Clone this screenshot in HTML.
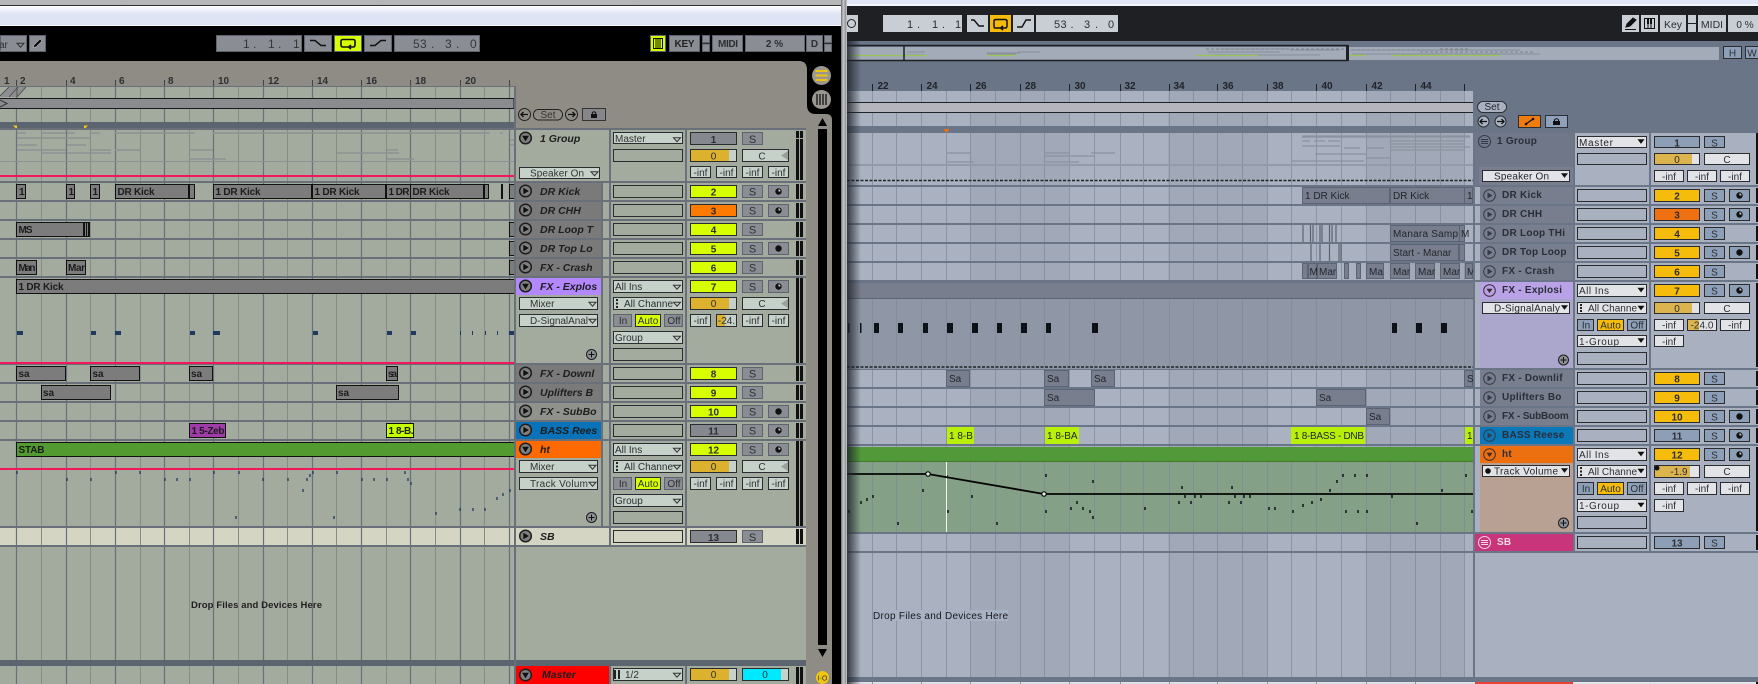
<!DOCTYPE html>
<html><head><meta charset="utf-8"><title>Live</title>
<style>
html,body{margin:0;padding:0;background:#000;width:1758px;height:684px;overflow:hidden}
svg{display:block}
rect{shape-rendering:crispEdges}
text{font-family:"Liberation Sans",sans-serif}
.n{font-weight:bold;font-style:italic;font-size:10.5px;fill:#1e1e1e}
.b{font-weight:bold}
.c{text-anchor:middle}
.r{font-size:10px;fill:#23262c}
.m{font-weight:bold;font-size:10px;fill:#2a2e38;letter-spacing:.25px}
.k{stroke:#2a2c2f;stroke-width:1}
.ld{fill:#c6d1ca}
.lg{fill:#a3aa9e}
.lb{fill:#868890}
.ly{fill:#d8ff00}
.lo{fill:#ff7a00}
.au{fill:#dcb12e}
.rd{fill:#e2e3e6}
.rg{fill:#a9b1c0}
.rb{fill:#8d9fb6}
.ry{fill:#f5bc0b}
.ro{fill:#ef7010}
.cl{fill:#7c7c7c;stroke:#111;stroke-width:1}
.cr{fill:#787e8e;stroke:#5c6372;stroke-width:1}
.bk{fill:#8b8d94;stroke:#5d646e}
.bw{fill:#c9cdd4}
</style></head><body>
<svg xmlns="http://www.w3.org/2000/svg" width="1758" height="684" viewBox="0 0 1758 684" font-size="10" fill="#2c2f33">
<defs>
<linearGradient id="sh" x1="0" x2="1" y1="0" y2="0"><stop offset="0" stop-color="#20232a" stop-opacity=".85"/><stop offset="1" stop-color="#20232a" stop-opacity="0"/></linearGradient>
<linearGradient id="ed" x1="0" x2="1" y1="0" y2="0"><stop offset="0" stop-color="#6f7173"/><stop offset=".4" stop-color="#c8c9cb"/><stop offset=".85" stop-color="#8b8d90"/><stop offset="1" stop-color="#f4f4f4"/></linearGradient>
<linearGradient id="tw" x1="0" x2="0" y1="0" y2="1"><stop offset="0" stop-color="#fff"/><stop offset=".4" stop-color="#dfe5f5"/><stop offset="1" stop-color="#dde3f4"/></linearGradient>
<g id="pl"><circle r="5.8" fill="#807f80" stroke="#1d1d1d" stroke-width="1.5"/><path d="M-2.2-3.3L3.4 0L-2.2 3.3Z" fill="#111"/></g>
<g id="dn"><circle r="5.8" fill="#807f80" stroke="#1d1d1d" stroke-width="1.5"/><path d="M-3.4-2.2H3.4L0 3.4Z" fill="#111"/></g>
<g id="pr"><circle r="5.8" fill="none" stroke="#333a48" stroke-width="1"/><path d="M-2-3L3 0L-2 3Z" fill="#333a48"/></g>
<g id="dr"><circle r="5.8" fill="none" stroke="#3a2b30" stroke-width="1"/><path d="M-3-1.8H3L0 2.6Z" fill="#3a2b30"/></g>
<path id="ar" d="M-3.5-1.8H3.5L0 2.2Z" fill="none" stroke="#333" stroke-width="1"/>
<path id="ab" d="M-3.5-2.2H3.5L0 2.4Z" fill="#111"/>
<g id="plu"><circle r="5" fill="#8b8f96" stroke="#1d1d1d"/><path d="M-3 0H3M0-3V3" stroke="#111" stroke-width="1"/></g>
<g id="arm"><circle r="3.2" fill="#111"/><path d="M0-2.2A2.2 2.2 0 0 1 2 0H0Z" fill="#ccc"/></g>
<circle id="dot" r="3.2" fill="#111"/>
<g id="L"><rect class="lg k" x="613.5" y=".5" width="69" height="12"/><rect class="bk" x="742.5" y=".5" width="20" height="12"/><rect x="796" y="-1" width="3" height="15" fill="#111"/><rect x="800" y="-1" width="3" height="15" fill="#111"/></g>
<g id="R"><rect class="rg k" x="1577.5" y=".5" width="69" height="12"/><rect class="rb k" x="1704.5" y=".5" width="20" height="12"/><rect x="1756" y="-1" width="2" height="15" fill="#111"/></g>
</defs>

<!-- LEFT WINDOW frame -->
<rect x="0" y="0" width="847" height="5" fill="#b5b6b8"/>
<rect x="0" y="5" width="841" height="1" fill="#2f3033"/>
<rect x="0" y="6" width="841" height="19" fill="url(#tw)"/>
<rect x="0" y="25" width="841" height="1" fill="#f5f6fa"/>
<rect x="0" y="26" width="841" height="658" fill="#000"/>
<rect x="0" y="61" width="807" height="623" fill="#8f8c85"/>
<path d="M799 61Q807 61 807 70V105Q807 114 816 114H832V684H807V61Z" fill="#000"/>
<path d="M790 61Q807 61 807 70V105Q807 114 816 114H826Q832 114 832 120V684H790Z" fill="#8f8c85"/>

<!-- left transport -->
<rect class="bk" x=".5" y="35.5" width="26" height="16"/>
<text x="-1" y="48">ar</text><use href="#ar" x="20.5" y="45"/>
<rect class="bk" x="29.5" y="35.5" width="16" height="16"/>
<path d="M33 48L34 45L40 39L42 41L36 47Z" fill="#111" stroke="#ddd" stroke-width=".5"/>
<rect class="bk" x="216.5" y="35.5" width="85" height="16"/><rect class="bk" x="304.5" y="35.5" width="27" height="16"/><rect x="334.5" y="35.5" width="27" height="16" fill="#d8ff00" stroke="#5d646e"/><rect class="bk" x="364.5" y="35.5" width="27" height="16"/><rect class="bk" x="394.5" y="35.5" width="85" height="16"/>
<text x="243 253 268 278 293" y="48" font-size="12" fill="#33373d">1.1.1</text>
<text x="413 420 431 445 456 470" y="48" font-size="12" fill="#33373d">53.3.0</text>
<path d="M310 40.5H315L321 45.5H326" fill="none" stroke="#111" stroke-width="1.5"/>
<path d="M370 45.5H375L381 40.5H386" fill="none" stroke="#111" stroke-width="1.5"/>
<path d="M348 47H343Q341 47 341 45V41Q341 39.500 343 39.500H353Q355 39.500 355 41V45Q355 47 353 47H350M351 45L348.500 47L351 49" fill="none" stroke="#111" stroke-width="1.6"/>
<rect x="650.5" y="35.5" width="15" height="16" fill="#d8ff00" stroke="#5d646e"/>
<path d="M653.500 38.500H662.500V48.500H653.500ZM656 38.500V48.500M658 38.500V48.500M660 38.500V48.500" fill="none" stroke="#111" stroke-width="1"/>
<rect class="bk" x="669.5" y="35.5" width="30" height="16"/><rect class="bk" x="702.500" y="35.5" width="7" height="7"/><rect class="bk" x="702.500" y="44" width="7" height="7.500"/><rect class="bk" x="712.500" y="35.5" width="30" height="16"/><rect class="bk" x="745.500" y="35.5" width="59" height="16"/><rect class="bk" x="806.500" y="35.5" width="16" height="16"/><rect class="bk" x="824.500" y="35.5" width="7" height="7"/><rect class="bk" x="824.500" y="44" width="7" height="7.500"/>
<text class="b c" x="684.500" y="47" textLength="20" fill="#222">KEY</text><text class="b c" x="728" y="47" textLength="20">MIDI</text><text class="b c" x="774.500" y="47">2 %</text><text class="b c" x="814.500" y="47">D</text>

<!-- left ruler -->
<g font-size="10" class="b"><text x="4" y="84">1</text><text x="20" y="84">2</text><text x="70" y="84">4</text><text x="119" y="84">6</text><text x="168" y="84">8</text><text x="218" y="84">10</text><text x="268" y="84">12</text><text x="317" y="84">14</text><text x="366" y="84">16</text><text x="415" y="84">18</text><text x="465" y="84">20</text></g>
<path d="M16.500 80V86M66.500 80V86M115.500 80V86M164.500 80V86M213.500 80V86M263.500 80V86M312.500 80V86M361.500 80V86M410.500 80V86M460.500 80V86M509.500 80V86" stroke="#444"/>

<!-- left track bg + grid -->
<rect class="lg" x="0" y="86" width="514" height="598"/>
<rect x="0" y="527" width="514" height="18" fill="#d4d6c3"/>
<path d="M41.500 86V684M90.500 86V684M140.500 86V684M189.500 86V684M238.500 86V684M287.500 86V684M336.500 86V684M386.500 86V684M435.500 86V684M484.500 86V684" stroke="#868c88"/>
<path d="M16.500 86V684M66.500 86V684M115.500 86V684M164.500 86V684M213.500 86V684M263.500 86V684M312.500 86V684M361.500 86V684M410.500 86V684M460.500 86V684M509.500 86V684" stroke="#6a7079" stroke-width="1.200"/>
<rect x="0" y="86" width="514" height="1" fill="#6a7079"/>
<path d="M0 97L9 87H18L9 97ZM9 97L18 87H26L17 97Z" fill="#8c8e90"/><path d="M0 96L9 87M9 97L18 87M17 97L26 87M17 97V87" stroke="#444" stroke-width=".8" fill="none"/>
<rect x="-1" y="98.500" width="515" height="10" fill="#8b8c8f" stroke="#16181b"/>
<path d="M0 100L7 103.500L0 107" fill="none" stroke="#333"/>
<rect x="0" y="122" width="514" height="8" fill="#5c6470"/>
<path d="M13 125.500H17V129.500Z" fill="#f5cc10"/><path d="M84 125.500H88L84 129.500Z" fill="#f5cc10"/>
<!-- row separators -->
<g fill="#6a7079"><rect x="0" y="181" width="806" height="2"/><rect x="0" y="200" width="806" height="2"/><rect x="0" y="219" width="806" height="2"/><rect x="0" y="238" width="806" height="2"/><rect x="0" y="257" width="806" height="2"/><rect x="0" y="276" width="806" height="2"/><rect x="0" y="363" width="806" height="2"/><rect x="0" y="382" width="806" height="2"/><rect x="0" y="401" width="806" height="2"/><rect x="0" y="420" width="806" height="2"/><rect x="0" y="439" width="806" height="2"/><rect x="0" y="526" width="806" height="2"/><rect x="0" y="545" width="806" height="2"/></g>
<rect x="0" y="660" width="806" height="6" fill="#5c6470"/>
<!-- group note previews -->
<path d="M17 133H26M42 133H66M67 133H75M91 133H100M115 133H195M213 133H490M500 133H503M17 145H37M67 145H86M17 150H66M42 153H66M67 153H90M91 150H111M91 153H111M115 150H140M190 150H213M190 159H226M337 153H386M387 150H398M387 153H399M387 159H414M17 138H90M510 140H514M510 145H514" stroke="#8d9292" stroke-width="1.500"/>
<rect x="0" y="161" width="514" height="1" fill="#8d9292"/>
<rect x="0" y="175" width="514" height="2" fill="#f0185a"/>
<rect x="0" y="362" width="514" height="2" fill="#f0185a"/>
<rect x="0" y="468" width="514" height="2" fill="#f0185a"/>
<!-- left clips -->
<g><rect class="cl" x="16.500" y="184.500" width="9" height="14"/><rect class="cl" x="66.500" y="184.500" width="8" height="14"/><rect class="cl" x="90.500" y="184.500" width="9" height="14"/><rect class="cl" x="115.500" y="184.500" width="79" height="14"/><rect x="188" y="184" width="2" height="15" fill="#111"/><rect class="cl" x="213.500" y="184.500" width="98" height="14"/><rect class="cl" x="312.500" y="184.500" width="73" height="14"/><rect class="cl" x="386.500" y="184.500" width="24" height="14"/><rect class="cl" x="410.500" y="184.500" width="73" height="14"/><rect class="cl" x="484.500" y="184.500" width="4" height="14"/><rect class="cl" x="501.500" y="184.500" width="1" height="14"/><rect class="cl" x="509.500" y="184.500" width="5" height="14"/>
<rect class="cl" x="16.500" y="222.500" width="73" height="14"/><rect x="83" y="222" width="2" height="15" fill="#111"/><rect x="86" y="222" width="1" height="15" fill="#111"/><rect x="88" y="222" width="1" height="15" fill="#111"/>
<rect class="cl" x="509.500" y="222.500" width="5" height="14"/><rect class="cl" x="509.500" y="241.500" width="5" height="14"/><rect class="cl" x="509.500" y="260.500" width="5" height="14"/>
<rect class="cl" x="16.500" y="260.500" width="20" height="14"/><rect class="cl" x="66.500" y="260.500" width="19" height="14"/>
<rect class="cl" x="16.500" y="279.500" width="498" height="14"/>
<rect class="cl" x="16.500" y="366.500" width="49" height="14"/><rect class="cl" x="90.500" y="366.500" width="49" height="14"/><rect class="cl" x="189.500" y="366.500" width="23" height="14"/><rect class="cl" x="386.500" y="366.500" width="11" height="14"/>
<rect class="cl" x="41.500" y="385.500" width="69" height="14"/><rect class="cl" x="336.500" y="385.500" width="62" height="14"/>
<rect x="189.500" y="423.500" width="36" height="14" fill="#9f3ca8" stroke="#111"/><rect x="386.500" y="423.500" width="27" height="14" fill="#c6ff00" stroke="#111"/>
<rect x="16.500" y="442.500" width="498" height="14" fill="#539b30" stroke="#111"/></g>
<g class="b" fill="#1c1c1c">
<text x="19" y="195">1</text><text x="68.500" y="195">1</text><text x="92.500" y="195">1</text><text x="117.500" y="195" textLength="37">DR Kick</text><text x="215.500" y="195" textLength="45">1 DR Kick</text><text x="314.500" y="195" textLength="45">1 DR Kick</text><text x="388.500" y="195" textLength="21">1 DR</text><text x="412.500" y="195" textLength="37">DR Kick</text>
<text x="18.500" y="233" textLength="14">MS</text><text x="18.500" y="271" textLength="17">Man</text><text x="68" y="271" textLength="17">Mar</text><text x="18.500" y="290" textLength="45">1 DR Kick</text>
<text x="18.500" y="377">sa</text><text x="92.500" y="377">sa</text><text x="191" y="377">sa</text><text x="388" y="377" textLength="9">sa</text><text x="43" y="396">sa</text><text x="338" y="396">sa</text>
<text x="191.500" y="434" textLength="33">1 5-Zeb</text><text x="388.500" y="434" textLength="25">1 8-B.</text><text x="18.500" y="453" textLength="26">STAB</text></g>
<!-- left notes -->
<g fill="#1f3a5f"><rect x="17" y="331" width="6" height="4"/><rect x="91" y="331" width="5" height="4"/><rect x="115" y="331" width="6" height="4"/><rect x="190" y="331" width="5" height="4"/><rect x="213" y="331" width="7" height="4"/><rect x="313" y="331" width="5" height="4"/><rect x="387" y="331" width="5" height="4"/><rect x="411" y="331" width="5" height="4"/><rect x="460" y="331" width="1" height="4"/><rect x="472" y="331" width="1" height="4"/><rect x="485" y="331" width="1" height="4"/><rect x="497" y="331" width="1" height="4"/><rect x="509" y="331" width="5" height="4"/></g>
<path d="M17 471v3M116 471v3M140 471v3M214 471v3M239 471v3M313 471v3M337 471v3M405 471v3M67 478v3M91 478v3M165 478v3M177 478v3M190 478v3M263 478v3M288 478v3M307 478v3M362 478v3M374 478v3M387 478v3M408 478v3M310 474v3M411 482v3M303 489v3M510 489v3M503 493v3M497 497v3M460 508v3M473 508v3M485 508v3M436 512v3M236 516v3M334 516v3" stroke="#1f3a5f" stroke-width="1.300"/>
<text class="b" x="191" y="608" textLength="131" fill="#1f1f1f" font-size="9.500">Drop Files and Devices Here</text>

<!-- left panel -->
<rect class="lg" x="516" y="130" width="290" height="530"/>
<rect class="lg" x="516" y="666" width="290" height="18"/>
<rect x="516" y="527" width="290" height="18" fill="#d4d6c3"/>
<g fill="#6a7079"><rect x="514" y="86" width="2" height="598"/><rect x="609" y="130" width="2" height="417"/><rect x="685" y="130" width="2" height="417"/><rect x="601" y="181" width="2" height="346"/><rect x="609" y="666" width="2" height="18"/><rect x="685" y="666" width="2" height="18"/><rect x="0" y="128" width="806" height="2"/></g>
<g fill="#6a7079"><rect x="516" y="181" width="290" height="2"/><rect x="516" y="200" width="290" height="2"/><rect x="516" y="219" width="290" height="2"/><rect x="516" y="238" width="290" height="2"/><rect x="516" y="257" width="290" height="2"/><rect x="516" y="276" width="290" height="2"/><rect x="516" y="363" width="290" height="2"/><rect x="516" y="382" width="290" height="2"/><rect x="516" y="401" width="290" height="2"/><rect x="516" y="420" width="290" height="2"/><rect x="516" y="439" width="290" height="2"/><rect x="516" y="526" width="290" height="2"/><rect x="516" y="545" width="290" height="2"/></g>
<rect x="516" y="183" width="85" height="17" fill="#7a7a7a"/><rect x="516" y="202" width="85" height="17" fill="#7a7a7a"/><rect x="516" y="221" width="85" height="17" fill="#7a7a7a"/><rect x="516" y="240" width="85" height="17" fill="#7a7a7a"/><rect x="516" y="259" width="85" height="17" fill="#7a7a7a"/>
<rect x="516" y="365" width="85" height="17" fill="#7a7a7a"/><rect x="516" y="384" width="85" height="17" fill="#7a7a7a"/>
<rect x="516" y="403" width="85" height="17" fill="#8f938c"/>
<rect x="516" y="278" width="85" height="17" fill="#b388ff"/><rect x="516" y="422" width="85" height="17" fill="#0a72b8"/><rect x="516" y="441" width="85" height="17" fill="#ff6a00"/><rect x="516" y="666" width="93" height="18" fill="#ff0000"/>
<!-- set -->
<circle cx="524.500" cy="114.500" r="6" fill="#8f8c85" stroke="#222"/><path d="M528 114.500H521M523.500 112L521 114.500L523.500 117" stroke="#111" fill="none" stroke-width="1.300"/>
<rect x="533.500" y="109.500" width="29" height="10.500" rx="5" fill="#8f8c85" stroke="#222"/><text class="c" x="548" y="118" fill="#333">Set</text>
<circle cx="571.500" cy="114.500" r="6" fill="#8f8c85" stroke="#222"/><path d="M568 114.500H575M572.500 112L575 114.500L572.500 117" stroke="#111" fill="none" stroke-width="1.300"/>
<rect x="582.500" y="108.500" width="23" height="12" fill="#86858a" stroke="#333"/><rect x="591" y="114" width="6" height="4" fill="#111"/><path d="M592.300 114V112.800Q594 110.800 595.700 112.800V114" fill="none" stroke="#111" stroke-width="1"/>
<!-- left name column -->
<use href="#dn" x="525.500" y="138"/><text class="n" x="540" y="142">1 Group</text>
<rect class="ld k" x="519.500" y="167.500" width="80" height="11"/><text x="530" y="176.500" textLength="54" fill="#333">Speaker On</text><use href="#ar" x="594.500" y="173.500"/>
<use href="#pl" x="525.500" y="191"/><text class="n" x="540" y="195">DR Kick</text>
<use href="#pl" x="525.500" y="210"/><text class="n" x="540" y="214">DR CHH</text>
<use href="#pl" x="525.500" y="229"/><text class="n" x="540" y="233">DR Loop T</text>
<use href="#pl" x="525.500" y="248"/><text class="n" x="540" y="252">DR Top Lo</text>
<use href="#pl" x="525.500" y="267"/><text class="n" x="540" y="271">FX - Crash</text>
<use href="#dn" x="525.500" y="286"/><text class="n" x="540" y="290">FX - Explos</text>
<rect class="ld k" x="519.500" y="297.500" width="78" height="12"/><text x="530" y="307" fill="#333">Mixer</text><use href="#ar" x="592.500" y="304"/>
<rect class="ld k" x="519.500" y="314.500" width="78" height="12"/><text x="530" y="324" fill="#333" textLength="58">D-SignalAnal</text><use href="#ar" x="592.500" y="321"/>
<use href="#plu" x="591.500" y="354.500"/>
<use href="#pl" x="525.500" y="373"/><text class="n" x="540" y="377">FX - Downl</text>
<use href="#pl" x="525.500" y="392"/><text class="n" x="540" y="396">Uplifters B</text>
<use href="#pl" x="525.500" y="411"/><text class="n" x="540" y="415">FX - SubBo</text>
<use href="#pl" x="525.500" y="430"/><text class="n" x="540" y="434">BASS Rees</text>
<use href="#dn" x="525.500" y="449"/><text class="n" x="540" y="453">ht</text>
<rect class="ld k" x="519.500" y="460.500" width="78" height="12"/><text x="530" y="470" fill="#333">Mixer</text><use href="#ar" x="592.500" y="467"/>
<rect class="ld k" x="519.500" y="477.500" width="78" height="12"/><text x="530" y="487" fill="#333" textLength="58">Track Volum</text><use href="#ar" x="592.500" y="484"/>
<use href="#plu" x="591.500" y="517.500"/>
<use href="#pl" x="525.500" y="536"/><text class="n" x="540" y="540">SB</text>
<use href="#dn" x="525.500" y="675"/><text class="n" x="542" y="678">Master</text>
<!-- left mid / right columns -->
<rect class="ld k" x="613.500" y="132.500" width="69" height="11"/><text x="615" y="142" fill="#333">Master</text><use href="#ar" x="677" y="139.500"/><rect class="lg k" x="613.500" y="149.500" width="69" height="12"/>
<rect class="lb k" x="690.500" y="132.500" width="46" height="12"/><text class="b c" x="713.500" y="143">1</text>
<rect class="bk" x="742.500" y="132.500" width="20" height="12"/><text class="c" x="752.500" y="143" font-size="11">S</text>
<rect class="ld k" x="690.500" y="149.500" width="46" height="12"/><rect class="au" x="691" y="150" width="38" height="11"/><text class="c" x="713.500" y="159.500">0</text>
<rect class="ld k" x="742.500" y="149.500" width="46" height="12"/><text class="c" x="762" y="159.500">C</text><path d="M788 151V160L781 155.500Z" fill="#99a09c"/>
<rect class="ld k" x="690.500" y="166.500" width="20" height="11"/><rect class="ld k" x="716.500" y="166.500" width="20" height="11"/><rect class="ld k" x="742.500" y="166.500" width="20" height="11"/><rect class="ld k" x="768.500" y="166.500" width="20" height="11"/><text class="c" x="700.500" y="176">-inf</text><text class="c" x="726.500" y="176">-inf</text><text class="c" x="752.500" y="176">-inf</text><text class="c" x="778.500" y="176">-inf</text>
<rect x="796" y="131" width="3" height="49" fill="#111"/><rect x="800" y="131" width="3" height="49" fill="#111"/><rect x="796" y="138" width="7" height="1" fill="#a3aa9e"/>

<g transform="translate(0 185)"><use href="#L"/><rect class="ly k" x="690.500" y=".5" width="46" height="12"/><text class="b c" x="713.500" y="10.500">2</text><text class="c" x="752.500" y="10.500" font-size="11">S</text><rect class="bk" x="768.500" y=".5" width="20" height="12"/><use href="#arm" x="778.500" y="6.500"/></g>
<g transform="translate(0 204)"><use href="#L"/><rect class="lo k" x="690.500" y=".5" width="46" height="12"/><text class="b c" x="713.500" y="10.500">3</text><text class="c" x="752.500" y="10.500" font-size="11">S</text><rect class="bk" x="768.500" y=".5" width="20" height="12"/><use href="#arm" x="778.500" y="6.500"/></g>
<g transform="translate(0 223)"><use href="#L"/><rect class="ly k" x="690.500" y=".5" width="46" height="12"/><text class="b c" x="713.500" y="10.500">4</text><text class="c" x="752.500" y="10.500" font-size="11">S</text></g>
<g transform="translate(0 242)"><use href="#L"/><rect class="ly k" x="690.500" y=".5" width="46" height="12"/><text class="b c" x="713.500" y="10.500">5</text><text class="c" x="752.500" y="10.500" font-size="11">S</text><rect class="bk" x="768.500" y=".5" width="20" height="12"/><use href="#dot" x="778.500" y="6.500"/></g>
<g transform="translate(0 261)"><use href="#L"/><rect class="ly k" x="690.500" y=".5" width="46" height="12"/><text class="b c" x="713.500" y="10.500">6</text><text class="c" x="752.500" y="10.500" font-size="11">S</text></g>
<g transform="translate(0 280)"><rect class="ld k" x="613.500" y=".5" width="69" height="12"/><text x="615" y="10">All Ins</text><use href="#ar" x="677" y="7"/><rect class="bk" x="742.500" y=".5" width="20" height="12"/><rect class="ly k" x="690.500" y=".5" width="46" height="12"/><text class="b c" x="713.500" y="10.500">7</text><text class="c" x="752.500" y="10.500" font-size="11">S</text><rect class="bk" x="768.500" y=".5" width="20" height="12"/><use href="#arm" x="778.500" y="6.500"/></g>
<rect x="796" y="278" width="3" height="85" fill="#111"/><rect x="800" y="278" width="3" height="85" fill="#111"/>
<g transform="translate(0 297)"><rect class="ld k" x="613.500" y=".5" width="69" height="12"/><rect x="616" y="2" width="2" height="2" fill="#222"/><rect x="616" y="5.500" width="2" height="2" fill="#222"/><rect x="616" y="9" width="2" height="2" fill="#222"/><text x="624" y="10" textLength="49">All Channe</text><use href="#ar" x="677" y="7"/><rect class="ld k" x="690.500" y=".5" width="46" height="12"/><rect class="au" x="691" y="1" width="38" height="11"/><text class="c" x="713.500" y="10">0</text><rect class="ld k" x="742.500" y=".5" width="46" height="12"/><text class="c" x="762" y="10">C</text><path d="M788 2V11L781 6.500Z" fill="#99a09c"/></g>
<g transform="translate(0 314)"><rect class="bk" x="613.500" y=".5" width="18" height="12"/><text class="c" x="623" y="10">In</text><rect class="ly k" x="635.500" y=".5" width="25" height="12"/><text class="c" x="648" y="10">Auto</text><rect class="bk" x="664.500" y=".5" width="18" height="12"/><text class="c" x="674" y="10">Off</text><rect class="ld k" x="690.500" y=".5" width="20" height="12"/><text class="c" x="700.500" y="10">-inf</text><rect class="ld k" x="716.500" y=".5" width="20" height="12"/><rect class="au" x="717" y="1" width="8" height="11"/><text class="c" x="726.500" y="10">-24.</text><rect class="ld k" x="742.500" y=".5" width="20" height="12"/><text class="c" x="752.500" y="10">-inf</text><rect class="ld k" x="768.500" y=".5" width="20" height="12"/><text class="c" x="778.500" y="10">-inf</text></g>
<rect class="ld k" x="613.500" y="331.500" width="69" height="12"/><text x="615" y="341">Group</text><use href="#ar" x="677" y="338"/><rect class="lg k" x="613.500" y="348.500" width="69" height="12"/>

<g transform="translate(0 367)"><use href="#L"/><rect class="ly k" x="690.500" y=".5" width="46" height="12"/><text class="b c" x="713.500" y="10.500">8</text><text class="c" x="752.500" y="10.500" font-size="11">S</text></g>
<g transform="translate(0 386)"><use href="#L"/><rect class="ly k" x="690.500" y=".5" width="46" height="12"/><text class="b c" x="713.500" y="10.500">9</text><text class="c" x="752.500" y="10.500" font-size="11">S</text></g>
<g transform="translate(0 405)"><use href="#L"/><rect class="ly k" x="690.500" y=".5" width="46" height="12"/><text class="b c" x="713.500" y="10.500">10</text><text class="c" x="752.500" y="10.500" font-size="11">S</text><rect class="bk" x="768.500" y=".5" width="20" height="12"/><use href="#dot" x="778.500" y="6.500"/></g>
<g transform="translate(0 424)"><use href="#L"/><rect class="lb k" x="690.500" y=".5" width="46" height="12"/><text class="b c" x="713.500" y="10.500">11</text><text class="c" x="752.500" y="10.500" font-size="11">S</text><rect class="bk" x="768.500" y=".5" width="20" height="12"/><use href="#arm" x="778.500" y="6.500"/></g>
<g transform="translate(0 443)"><rect class="ld k" x="613.500" y=".5" width="69" height="12"/><text x="615" y="10">All Ins</text><use href="#ar" x="677" y="7"/><rect class="bk" x="742.500" y=".5" width="20" height="12"/><rect class="ly k" x="690.500" y=".5" width="46" height="12"/><text class="b c" x="713.500" y="10.500">12</text><text class="c" x="752.500" y="10.500" font-size="11">S</text><rect class="bk" x="768.500" y=".5" width="20" height="12"/><use href="#arm" x="778.500" y="6.500"/></g>
<rect x="796" y="441" width="3" height="85" fill="#111"/><rect x="800" y="441" width="3" height="85" fill="#111"/>
<g transform="translate(0 460)"><rect class="ld k" x="613.500" y=".5" width="69" height="12"/><rect x="616" y="2" width="2" height="2" fill="#222"/><rect x="616" y="5.500" width="2" height="2" fill="#222"/><rect x="616" y="9" width="2" height="2" fill="#222"/><text x="624" y="10" textLength="49">All Channe</text><use href="#ar" x="677" y="7"/><rect class="ld k" x="690.500" y=".5" width="46" height="12"/><rect class="au" x="691" y="1" width="38" height="11"/><text class="c" x="713.500" y="10">0</text><rect class="ld k" x="742.500" y=".5" width="46" height="12"/><text class="c" x="762" y="10">C</text><path d="M788 2V11L781 6.500Z" fill="#99a09c"/></g>
<g transform="translate(0 477)"><rect class="bk" x="613.500" y=".5" width="18" height="12"/><text class="c" x="623" y="10">In</text><rect class="ly k" x="635.500" y=".5" width="25" height="12"/><text class="c" x="648" y="10">Auto</text><rect class="bk" x="664.500" y=".5" width="18" height="12"/><text class="c" x="674" y="10">Off</text><rect class="ld k" x="690.500" y=".5" width="20" height="12"/><text class="c" x="700.500" y="10">-inf</text><rect class="ld k" x="716.500" y=".5" width="20" height="12"/><text class="c" x="726.500" y="10">-inf</text><rect class="ld k" x="742.500" y=".5" width="20" height="12"/><text class="c" x="752.500" y="10">-inf</text><rect class="ld k" x="768.500" y=".5" width="20" height="12"/><text class="c" x="778.500" y="10">-inf</text></g>
<rect class="ld k" x="613.500" y="494.500" width="69" height="12"/><text x="615" y="504">Group</text><use href="#ar" x="677" y="501"/><rect class="lg k" x="613.500" y="511.500" width="69" height="12"/>
<rect x="613.500" y="530.500" width="69" height="12" fill="#d4d6c3" class="k"/><rect class="lb k" x="690.500" y="530.500" width="46" height="12"/><text class="b c" x="713.500" y="541">13</text><rect class="bk" x="742.500" y="530.500" width="20" height="12"/><text class="c" x="752.500" y="541" font-size="11">S</text><rect x="796" y="529" width="3" height="15" fill="#111"/><rect x="800" y="529" width="3" height="15" fill="#111"/>
<rect class="ld k" x="613.500" y="668.500" width="69" height="12"/><rect x="614" y="670" width="2" height="9" fill="#222"/><rect x="618" y="670" width="2" height="9" fill="#222"/><text x="625" y="678">1/2</text><use href="#ar" x="677" y="675"/>
<rect class="ld k" x="690.500" y="668.500" width="46" height="12"/><rect class="au" x="691" y="669" width="38" height="11"/><text class="c" x="713.500" y="678">0</text>
<rect class="ld k" x="742.500" y="668.500" width="46" height="12"/><rect x="743" y="669" width="38" height="11" fill="#00eaff"/><text class="c" x="765" y="678">0</text>
<rect x="796" y="667" width="3" height="17" fill="#111"/><rect x="800" y="667" width="3" height="17" fill="#111"/>
<!-- left round buttons + scrollbar -->
<circle cx="821.500" cy="75.500" r="9.500" fill="#9a978e"/><path d="M815.500 71H827.500M815.500 75.500H827.500M815.500 80H827.500" stroke="#eec413" stroke-width="2"/>
<circle cx="821.500" cy="99.500" r="9.500" fill="#9a978e"/><path d="M817 94V105M820 94V105M823 94V105M826 94V105" stroke="#2a2a2c" stroke-width="1.600"/>
<rect x="818" y="129" width="9" height="516" fill="#000"/>
<path d="M822.500 118L827 126H818Z" fill="#000"/><path d="M818 649H827L822.500 657Z" fill="#000"/>
<rect x="832" y="114" width="9" height="570" fill="#000"/>
<circle cx="822.500" cy="677.500" r="6.500" fill="#f0c613"/><text class="c" x="822.500" y="680.500" font-size="7">I·O</text>

<!-- RIGHT WINDOW -->
<rect x="841" y="0" width="6" height="684" fill="url(#ed)"/>
<rect x="847" y="0" width="911" height="684" fill="#6a7587"/>
<rect x="847" y="0" width="911" height="4" fill="#e0e6f5"/>
<rect x="847" y="4" width="911" height="2" fill="#f5f6fa"/>
<rect x="847" y="6" width="911" height="35" fill="#1e2024"/>
<!-- right transport -->
<rect class="bw" x="847" y="15" width="11" height="17"/><circle cx="851.500" cy="23.500" r="4" fill="none" stroke="#222"/>
<rect class="bw" x="883" y="15" width="79" height="17"/><rect class="bw" x="967" y="15" width="21" height="17"/><rect x="990" y="15" width="21" height="17" fill="#f5b90a"/><rect class="bw" x="1013" y="15" width="21" height="17"/><rect class="bw" x="1036" y="15" width="82" height="17"/>
<text x="907 917 932 942 955" y="28" font-size="11">1.1.1</text>
<text x="1054 1060.500 1070.500 1084 1095 1108" y="28" font-size="11">53.3.0</text>
<path d="M971 20H974L979 26H984" fill="none" stroke="#111" stroke-width="1.400"/>
<path d="M1017 27H1022L1026 20H1031" fill="none" stroke="#111" stroke-width="1.400"/>
<path d="M1000 28H995Q994 28 994 26V21Q994 19.500 996 19.500H1005Q1007 19.500 1007 21V26Q1007 28 1005 28H1002M1003 26L1000.500 28L1003 30" fill="none" stroke="#111" stroke-width="1.500"/>
<rect class="bw" x="1622" y="15" width="17" height="17"/><path d="M1626 27L1627 24L1633 18L1636 20L1630 26Z M1625 29.500H1636" fill="#111" stroke="#111"/>
<rect class="bw" x="1641" y="15" width="17" height="17"/><path d="M1644.500 18.500H1654.500V28.500H1644.500ZM1648 18.500V28.500M1651 18.500V28.500" fill="none" stroke="#111"/><rect x="1647" y="18" width="2" height="6" fill="#111"/><rect x="1650" y="18" width="2" height="6" fill="#111"/>
<rect class="bw" x="1660" y="15" width="26" height="17"/><rect class="bw" x="1688" y="15" width="8" height="8"/><rect class="bw" x="1688" y="24" width="8" height="8"/><rect class="bw" x="1698" y="15" width="28" height="17"/><rect class="bw" x="1728" y="15" width="30" height="17"/>
<text class="c" x="1673" y="28" font-size="10.500">Key</text><text class="c" x="1712" y="28" font-size="10.500">MIDI</text><text class="c" x="1745" y="28">0 %</text>
<!-- overview -->
<rect x="847" y="47" width="872" height="13" fill="#a3abb9"/>
<path d="M903 55H924M907 52H925M987 53H1020M987 54H1016M1018 52H1040M847 55.500H925M1220 49H1290M1208 52H1280M1210 55H1320M1290 50H1340M1350 50H1520M1352 54H1540" stroke="#8a8f9a" stroke-width="1"/>
<path d="M1206 49H1348M1352 50H1430M1420 52H1535M1440 49H1470" stroke="#7d828d" stroke-dasharray="3 2" stroke-width="1"/>
<path d="M847 55.500H927M987 55.500H1016M1196 55.500H1258M1348 55.500H1366M1392 55.500H1500" stroke="#9ac45a" stroke-width="1.200"/>
<path d="M847 45.500H1347.500V60.500H847M904 46V60" fill="none" stroke="#1e2024" stroke-width="1.500"/>
<rect x="1346" y="45" width="3" height="16" fill="#1e2024"/>
<rect class="rb k" x="1723.500" y="46.500" width="18" height="12"/><text class="c" x="1732.500" y="56.500">H</text><rect class="rb k" x="1745.500" y="46.500" width="13" height="12"/><text class="c" x="1752" y="56.500">W</text>
<!-- right ruler -->
<g class="b" fill="#1f2228"><text x="877.500" y="89">22</text><text x="926.500" y="89">24</text><text x="975.500" y="89">26</text><text x="1025" y="89">28</text><text x="1074.500" y="89">30</text><text x="1124.500" y="89">32</text><text x="1173.500" y="89">34</text><text x="1222.500" y="89">36</text><text x="1272.500" y="89">38</text><text x="1321.500" y="89">40</text><text x="1371.500" y="89">42</text><text x="1420.500" y="89">44</text></g>
<path d="M872.500 84V91M921.500 84V91M970.500 84V91M1020.500 84V91M1069.500 84V91M1120.500 84V91M1169.500 84V91M1217.500 84V91M1267.500 84V91M1316.500 84V91M1366.500 84V91M1415.500 84V91M1464.500 84V91" stroke="#1f2228"/>
<!-- right tracks -->
<rect x="847" y="91" width="626" height="586" fill="#aab2c1"/>
<g fill="#a1a9b8"><rect x="970" y="91" width="99" height="586"/><rect x="1168" y="91" width="99" height="586"/><rect x="1366" y="91" width="98" height="586"/></g>
<rect x="847" y="298" width="626" height="71" fill="#8f97a6"/>
<rect x="847" y="462" width="626" height="70" fill="#84a087"/>
<path d="M872.500 91V677M921.500 91V677M970.500 91V677M1020.500 91V677M1069.500 91V677M1120.500 91V677M1169.500 91V677M1217.500 91V677M1267.500 91V677M1316.500 91V677M1366.500 91V677M1415.500 91V677M1464.500 91V677M896.500 91V677M946.500 91V677M995.500 91V677M1044.500 91V677M1094.500 91V677M1143.500 91V677M1193.500 91V677M1242.500 91V677M1291.500 91V677M1341.500 91V677M1390.500 91V677M1440.500 91V677" stroke="#7f8999" stroke-opacity=".75"/>
<rect x="847" y="102" width="626" height="11" fill="#b5b6bd"/>
<rect x="847" y="102" width="626" height="1" fill="#1f2228"/><rect x="847" y="112" width="626" height="1" fill="#1f2228"/>
<rect x="847" y="126" width="626" height="7" fill="#6a7587"/>
<path d="M943.500 129H949.500L946.500 133Z" fill="#ef7010"/>
<rect x="847" y="164" width="626" height="2" fill="#939aa8"/>
<path d="M1302 136H1470M1302 137H1470M1302 141H1310M1314 141H1325M1328 141H1340M1390 141H1465M1390 144H1465M1390 147H1470M1302 146H1340M1344 148H1360M1366 148H1384M1315 154H1366M1366 158H1390M1292 161H1364M1390 150H1465M947 153H970M947 162H974M1044 153H1069M1044 156H1095M1091 153H1115M1044 162H1079" stroke="#8b929f" stroke-width="1.300"/>
<path d="M847 180.500H1473" stroke="#1f2228" stroke-width="1.500" stroke-dasharray="3 1.500"/>
<path d="M847 367H1473" stroke="#1f2228" stroke-width="1.500" stroke-dasharray="3 1.500"/>
<g fill="#6a7587"><rect x="847" y="185" width="626" height="2"/><rect x="847" y="204" width="626" height="2"/><rect x="847" y="223" width="626" height="2"/><rect x="847" y="242" width="626" height="2"/><rect x="847" y="261" width="626" height="2"/><rect x="847" y="280" width="626" height="3"/><rect x="847" y="369" width="626" height="1"/><rect x="847" y="387" width="626" height="2"/><rect x="847" y="406" width="626" height="2"/><rect x="847" y="425" width="626" height="2"/><rect x="847" y="444" width="626" height="2"/><rect x="847" y="532" width="626" height="2"/><rect x="847" y="551" width="626" height="2"/></g>
<rect x="847" y="283" width="626" height="15" fill="#787e8e"/><rect x="847" y="298" width="626" height="1" fill="#5c6372"/>
<rect x="847" y="447" width="626" height="15" fill="#52993a"/><rect x="847" y="461" width="626" height="1" fill="#3d7a2a"/>
<!-- right clips -->
<rect class="cr" x="1302.500" y="187.500" width="87" height="16"/><rect class="cr" x="1390.500" y="187.500" width="74" height="16"/><rect class="cr" x="1464.500" y="187.500" width="8" height="16"/>
<path d="M1310.500 225V242M1313 225V242M1320 225V242M1322 225V242M1329.500 225V242M1332 225V242M1336 225V242M1303 225V242M1311 244V261M1320 244V261M1329.500 244V261M1339 244V261M1341 244V261" stroke="#5c6372" stroke-width="1.200"/>
<rect class="cr" x="1390.500" y="225.500" width="69" height="16"/><rect class="cr" x="1459.500" y="225.500" width="5" height="16"/>
<rect class="cr" x="1390.500" y="244.500" width="68" height="16"/><rect class="cr" x="1459.500" y="244.500" width="5" height="16"/>
<rect class="cr" x="1302.500" y="263.500" width="5" height="15"/><rect class="cr" x="1308.500" y="263.500" width="8" height="15"/><rect class="cr" x="1317.500" y="263.500" width="19" height="15"/><rect class="cr" x="1344.500" y="263.500" width="4" height="15"/><rect class="cr" x="1356.500" y="263.500" width="4" height="15"/><rect class="cr" x="1366.500" y="263.500" width="17" height="15"/><rect class="cr" x="1390.500" y="263.500" width="19" height="15"/><rect class="cr" x="1415.500" y="263.500" width="19" height="15"/><rect class="cr" x="1440.500" y="263.500" width="19" height="15"/><rect class="cr" x="1465.500" y="263.500" width="7" height="15"/>
<text class="r" x="1305" y="199">1 DR Kick</text><text class="r" x="1393" y="199">DR Kick</text><text class="r" x="1467" y="199">1</text><text class="r" x="1393" y="237" textLength="65">Manara Samp</text><text class="r" x="1461" y="237">M</text><text class="r" x="1393" y="256">Start - Manar</text><text class="r" x="1309.500" y="275">M</text><text class="r" x="1319" y="275">Mar</text><text class="r" x="1369" y="275">Ma</text><text class="r" x="1393" y="275">Mar</text><text class="r" x="1418" y="275">Mar</text><text class="r" x="1443" y="275">Mar</text><text class="r" x="1467" y="275">M</text>
<rect class="cr" x="946.500" y="370.500" width="23" height="16"/><rect class="cr" x="1044.500" y="370.500" width="24" height="16"/><rect class="cr" x="1091.500" y="370.500" width="23" height="16"/><rect class="cr" x="1464.500" y="370.500" width="8" height="16"/><rect class="cr" x="1044.500" y="389.500" width="50" height="16"/><rect class="cr" x="1316.500" y="389.500" width="49" height="16"/><rect class="cr" x="1366.500" y="408.500" width="23" height="16"/>
<text class="r" x="949" y="382">Sa</text><text class="r" x="1047" y="382">Sa</text><text class="r" x="1094" y="382">Sa</text><text class="r" x="1467" y="382">S</text><text class="r" x="1047" y="401">Sa</text><text class="r" x="1319" y="401">Sa</text><text class="r" x="1369" y="420">Sa</text>
<g fill="#b8f00a"><rect x="947" y="427" width="27" height="17"/><rect x="1045" y="427" width="34" height="17"/><rect x="1291" y="427" width="74" height="17"/><rect x="1465" y="427" width="8" height="17"/></g>
<text class="r" x="949" y="439">1 8-B</text><text class="r" x="1047" y="439">1 8-BA</text><text class="r" x="1294" y="439" textLength="70">1 8-BASS - DNB</text><text class="r" x="1467" y="439">1</text>
<!-- notes -->
<g fill="#0f1118"><rect x="848" y="323" width="1.500" height="10"/><rect x="860" y="323" width="1.500" height="10"/><rect x="874" y="323" width="5" height="10"/><rect x="898" y="323" width="5" height="10"/><rect x="923" y="323" width="5" height="10"/><rect x="947" y="323" width="6" height="10"/><rect x="972" y="323" width="6" height="10"/><rect x="997" y="323" width="5" height="10"/><rect x="1021" y="323" width="6" height="10"/><rect x="1046" y="323" width="5" height="10"/><rect x="1092" y="323" width="6" height="10"/><rect x="1392" y="323" width="5" height="10"/><rect x="1416" y="323" width="6" height="10"/><rect x="1441" y="323" width="6" height="10"/></g>
<!-- automation -->
<path d="M849 510v3M861 501v3M867 498v3M873 495v3M898 522v3M923 489v3M947 475v3M948 510v3M972 495v3M997 522v3M1046 474v3M1046 510v3M1071 507v3M1077 501v3M1083 507v3M1090 510v3M1093 516v3M1093 480v3M1145 507v3M1179 501v3M1182 486v3M1185 495v3M1191 501v3M1195 495v3M1201 495v3M1229 501v3M1232 486v3M1235 495v3M1241 501v3M1244 495v3M1250 495v3M1269 507v3M1275 507v3M1293 510v3M1303 504v3M1312 501v3M1321 498v3M1330 489v3M1337 480v3M1343 474v3M1346 510v3M1355 474v3M1358 510v3M1367 474v3M1367 510v3M1392 495v3M1417 522v3M1442 489v3M1466 474v3M1472 510v3" stroke="#0f1118" stroke-width="1.500"/>
<rect x="946" y="462" width="1" height="70" fill="#f4f4ee"/>
<path d="M847 474H928L1044 494H1473" fill="none" stroke="#050505" stroke-width="1.800"/>
<circle cx="928" cy="474" r="2.200" fill="#e8efe8" stroke="#050505" stroke-width="1.200"/><circle cx="1044" cy="494" r="2.200" fill="#e8efe8" stroke="#050505" stroke-width="1.200"/>
<rect x="873" y="610" width="135" height="11" fill="#a9b2c2"/>
<text x="873" y="619" textLength="135" fill="#17181e">Drop Files and Devices Here</text>
<rect x="847" y="677" width="911" height="5" fill="#6a7587"/>
<rect x="847" y="682" width="911" height="2" fill="#dfe0e5"/>
<path d="M872.500 682V684M921.500 682V684M970.500 682V684M1020.500 682V684M1069.500 682V684M1120.500 682V684M1169.500 682V684M1217.500 682V684M1267.500 682V684M1316.500 682V684M1366.500 682V684M1415.500 682V684" stroke="#8a94a4"/>
<!-- right panel -->
<rect x="1475" y="133" width="283" height="544" fill="#a9b1c0"/>
<g fill="#6a7587"><rect x="1473" y="133" width="2" height="544"/><rect x="1573" y="133" width="2" height="420"/><rect x="1649" y="133" width="2" height="420"/><rect x="1475" y="185" width="283" height="2"/><rect x="1475" y="204" width="283" height="2"/><rect x="1475" y="223" width="283" height="2"/><rect x="1475" y="242" width="283" height="2"/><rect x="1475" y="261" width="283" height="2"/><rect x="1475" y="280" width="283" height="2"/><rect x="1475" y="368" width="283" height="2"/><rect x="1475" y="387" width="283" height="2"/><rect x="1475" y="406" width="283" height="2"/><rect x="1475" y="425" width="283" height="2"/><rect x="1475" y="444" width="283" height="2"/><rect x="1475" y="532" width="283" height="2"/><rect x="1475" y="551" width="283" height="2"/></g>
<rect x="1475" y="133" width="98" height="52" fill="#6f7788"/>
<rect x="1479" y="167" width="94" height="18" fill="#787e8e"/>
<g fill="#787e8e"><rect x="1480" y="187" width="93" height="17"/><rect x="1480" y="206" width="93" height="17"/><rect x="1480" y="225" width="93" height="17"/><rect x="1480" y="244" width="93" height="17"/><rect x="1480" y="263" width="93" height="17"/><rect x="1480" y="370" width="93" height="17"/><rect x="1480" y="389" width="93" height="17"/><rect x="1480" y="408" width="93" height="17"/></g>
<rect x="1480" y="282" width="93" height="17" fill="#b9a2e6"/><rect x="1480" y="299" width="93" height="69" fill="#aaa6cc"/>
<rect x="1480" y="427" width="93" height="17" fill="#0b78b8"/>
<rect x="1480" y="446" width="93" height="17" fill="#ec700f"/><rect x="1480" y="463" width="93" height="69" fill="#b8a093"/>
<rect x="1475" y="534" width="98" height="17" fill="#c8357a"/>
<rect x="1475" y="682" width="98" height="2" fill="#e8403a"/>
<!-- set buttons right -->
<rect x="1477.500" y="101.500" width="29" height="11" rx="5.500" fill="#a9b1c0" stroke="#2a2e38"/><text class="c" x="1492" y="110" fill="#23262c">Set</text>
<circle cx="1483.500" cy="121.500" r="5.500" fill="#a9b1c0" stroke="#2a2e38"/><path d="M1487 121.500H1480M1482.500 119L1480 121.500L1482.500 124" stroke="#111" fill="none" stroke-width="1.300"/>
<circle cx="1500.500" cy="121.500" r="5.500" fill="#a9b1c0" stroke="#2a2e38"/><path d="M1497 121.500H1504M1501.500 119L1504 121.500L1501.500 124" stroke="#111" fill="none" stroke-width="1.300"/>
<rect x="1518.500" y="115.500" width="22" height="12" fill="#f07c10" stroke="#2a2e38"/><path d="M1526 124L1533 119" stroke="#111" stroke-width="1.300"/><circle cx="1526" cy="124" r="1.300" fill="#111"/><circle cx="1533" cy="119" r="1.300" fill="#111"/>
<rect x="1545.500" y="115.500" width="22" height="12" fill="#8fa0b8" stroke="#2a2e38"/><rect x="1553" y="121" width="7" height="4" fill="#111"/><path d="M1554.500 121V119.800Q1556.500 117.500 1558.500 119.800V121" fill="none" stroke="#111"/>
<!-- right names -->
<circle cx="1484.500" cy="141.500" r="6" fill="none" stroke="#333a48"/><path d="M1481 139.500H1488M1481 141.500H1488M1481 143.500H1488" stroke="#333a48"/>
<text class="m" x="1497" y="144">1 Group</text>
<rect class="rd k" x="1482.500" y="170.500" width="87" height="11"/><text x="1494" y="179.500" textLength="55" fill="#1f2228">Speaker On</text><use href="#ab" x="1564.500" y="175.500"/>
<use href="#pr" x="1489.500" y="195.500"/><text class="m" x="1502" y="198">DR Kick</text>
<use href="#pr" x="1489.500" y="214.500"/><text class="m" x="1502" y="217">DR CHH</text>
<use href="#pr" x="1489.500" y="233.500"/><text class="m" x="1502" y="236">DR Loop THi</text>
<use href="#pr" x="1489.500" y="252.500"/><text class="m" x="1502" y="255">DR Top Loop</text>
<use href="#pr" x="1489.500" y="271.500"/><text class="m" x="1502" y="274">FX - Crash</text>
<use href="#dr" x="1489.500" y="290.500"/><text class="m" x="1502" y="293">FX - Explosi</text>
<rect class="rd k" x="1482.500" y="302.500" width="87" height="11"/><text x="1494" y="311.500" textLength="66" fill="#1f2228">D-SignalAnaly</text><use href="#ab" x="1564.500" y="307.500"/>
<use href="#plu" x="1563.500" y="360"/>
<use href="#pr" x="1489.500" y="378.500"/><text class="m" x="1502" y="381">FX - Downlif</text>
<use href="#pr" x="1489.500" y="397.500"/><text class="m" x="1502" y="400">Uplifters Bo</text>
<use href="#pr" x="1489.500" y="416.500"/><text class="m" x="1502" y="419" textLength="67">FX - SubBoom</text>
<use href="#pr" x="1489.500" y="435.500"/><text class="m" x="1502" y="438">BASS Reese</text>
<use href="#dr" x="1489.500" y="454.500"/><text class="m" x="1502" y="457">ht</text>
<rect class="rd k" x="1482.500" y="465.500" width="87" height="11"/><circle cx="1488" cy="471" r="2.800" fill="#111"/><text x="1494" y="474.500" textLength="64" fill="#1f2228">Track Volume</text><use href="#ab" x="1564.500" y="470.500"/>
<use href="#plu" x="1563.500" y="523"/>
<circle cx="1484.500" cy="542.500" r="6" fill="none" stroke="#f4d8e6"/><path d="M1481 540.500H1488M1481 542.500H1488M1481 544.500H1488" stroke="#f4d8e6"/><text class="m" x="1497" y="545" style="fill:#f6dbe8">SB</text>
<!-- right mid+controls -->
<rect class="rd k" x="1577.500" y="136.500" width="69" height="11"/><text x="1579" y="146" fill="#1f2228" textLength="34">Master</text><use href="#ab" x="1641" y="141.500"/><rect class="rg k" x="1577.500" y="153.500" width="69" height="11"/>
<rect class="rb k" x="1654.500" y="136.500" width="45" height="11"/><text class="b c" x="1677" y="146.500">1</text><rect class="rb k" x="1704.500" y="136.500" width="20" height="11"/><text class="c" x="1714.500" y="146.500">S</text>
<rect class="rd k" x="1654.500" y="153.500" width="45" height="11"/><rect x="1655" y="154" width="37" height="10" fill="#dcb44d"/><text class="c" x="1677" y="163">0</text>
<rect class="rd k" x="1704.500" y="153.500" width="45" height="11"/><text class="c" x="1727" y="163">C</text>
<rect class="rd k" x="1654.500" y="170.500" width="29" height="11"/><rect class="rd k" x="1687.500" y="170.500" width="29" height="11"/><rect class="rd k" x="1720.500" y="170.500" width="29" height="11"/><text class="c" x="1669" y="180">-inf</text><text class="c" x="1702" y="180">-inf</text><text class="c" x="1735" y="180">-inf</text>
<rect x="1756" y="133" width="2" height="51" fill="#111"/>

<g transform="translate(0 189)"><use href="#R"/><rect class="ry k" x="1654.500" y=".5" width="45" height="12"/><text class="b c" x="1677" y="10.500">2</text><text class="c" x="1714.500" y="10.500">S</text><rect class="rb k" x="1729.500" y=".5" width="20" height="12"/><use href="#arm" x="1739.500" y="6.500"/></g>
<g transform="translate(0 208)"><use href="#R"/><rect class="ro k" x="1654.500" y=".5" width="45" height="12"/><text class="b c" x="1677" y="10.500">3</text><text class="c" x="1714.500" y="10.500">S</text><rect class="rb k" x="1729.500" y=".5" width="20" height="12"/><use href="#arm" x="1739.500" y="6.500"/></g>
<g transform="translate(0 227)"><use href="#R"/><rect class="ry k" x="1654.500" y=".5" width="45" height="12"/><text class="b c" x="1677" y="10.500">4</text><text class="c" x="1714.500" y="10.500">S</text></g>
<g transform="translate(0 246)"><use href="#R"/><rect class="ry k" x="1654.500" y=".5" width="45" height="12"/><text class="b c" x="1677" y="10.500">5</text><text class="c" x="1714.500" y="10.500">S</text><rect class="rb k" x="1729.500" y=".5" width="20" height="12"/><use href="#dot" x="1739.500" y="6.500"/></g>
<g transform="translate(0 265)"><use href="#R"/><rect class="ry k" x="1654.500" y=".5" width="45" height="12"/><text class="b c" x="1677" y="10.500">6</text><text class="c" x="1714.500" y="10.500">S</text></g>
<g transform="translate(0 284)"><rect class="rd k" x="1577.500" y=".5" width="69" height="12"/><text x="1579" y="10" textLength="30">All Ins</text><use href="#ab" x="1641" y="6"/><rect class="rb k" x="1704.500" y=".5" width="20" height="12"/><rect class="ry k" x="1654.500" y=".5" width="45" height="12"/><text class="b c" x="1677" y="10.500">7</text><text class="c" x="1714.500" y="10.500">S</text><rect class="rb k" x="1729.500" y=".5" width="20" height="12"/><use href="#arm" x="1739.500" y="6.500"/></g>
<rect x="1756" y="283" width="2" height="84" fill="#111"/>
<g transform="translate(0 302)"><rect class="rd k" x="1577.500" y=".5" width="69" height="11"/><rect x="1580" y="2" width="2" height="2" fill="#222"/><rect x="1580" y="5" width="2" height="2" fill="#222"/><rect x="1580" y="8" width="2" height="2" fill="#222"/><text x="1588" y="9.500" textLength="49">All Channe</text><use href="#ab" x="1641" y="6"/><rect class="rd k" x="1654.500" y=".5" width="45" height="11"/><rect x="1655" y="1" width="37" height="10" fill="#dcb44d"/><text class="c" x="1677" y="10">0</text><rect class="rd k" x="1704.500" y=".5" width="45" height="11"/><text class="c" x="1727" y="10">C</text></g>
<g transform="translate(0 319)"><rect class="rb k" x="1577.500" y=".5" width="16" height="11"/><text class="c" x="1586" y="9.500">In</text><rect class="ry k" x="1597.500" y=".5" width="26" height="11"/><text class="c" x="1610.500" y="9.500">Auto</text><rect class="rb k" x="1627.500" y=".5" width="19" height="11"/><text class="c" x="1637" y="9.500">Off</text><rect class="rd k" x="1654.500" y=".5" width="29" height="11"/><text class="c" x="1669" y="9.500">-inf</text><rect class="rd k" x="1687.500" y=".5" width="29" height="11"/><rect x="1688" y="1" width="11" height="10" fill="#dcb44d"/><text class="c" x="1702" y="9.500">-24.0</text><rect class="rd k" x="1720.500" y=".5" width="29" height="11"/><text class="c" x="1735" y="9.500">-inf</text></g>
<rect class="rd k" x="1577.500" y="335.500" width="69" height="11"/><text x="1579" y="345" textLength="40">1-Group</text><use href="#ab" x="1641" y="340.500"/><rect class="rg k" x="1577.500" y="352.500" width="69" height="12"/><rect class="rd k" x="1654.500" y="335.500" width="29" height="11"/><text class="c" x="1669" y="345">-inf</text>

<g transform="translate(0 372)"><use href="#R"/><rect class="ry k" x="1654.500" y=".5" width="45" height="12"/><text class="b c" x="1677" y="10.500">8</text><text class="c" x="1714.500" y="10.500">S</text></g>
<g transform="translate(0 391)"><use href="#R"/><rect class="ry k" x="1654.500" y=".5" width="45" height="12"/><text class="b c" x="1677" y="10.500">9</text><text class="c" x="1714.500" y="10.500">S</text></g>
<g transform="translate(0 410)"><use href="#R"/><rect class="ry k" x="1654.500" y=".5" width="45" height="12"/><text class="b c" x="1677" y="10.500">10</text><text class="c" x="1714.500" y="10.500">S</text><rect class="rb k" x="1729.500" y=".5" width="20" height="12"/><use href="#dot" x="1739.500" y="6.500"/></g>
<g transform="translate(0 429)"><use href="#R"/><rect class="rb k" x="1654.500" y=".5" width="45" height="12"/><text class="b c" x="1677" y="10.500">11</text><text class="c" x="1714.500" y="10.500">S</text><rect class="rb k" x="1729.500" y=".5" width="20" height="12"/><use href="#arm" x="1739.500" y="6.500"/></g>
<g transform="translate(0 448)"><rect class="rd k" x="1577.500" y=".5" width="69" height="12"/><text x="1579" y="10" textLength="30">All Ins</text><use href="#ab" x="1641" y="6"/><rect class="rb k" x="1704.500" y=".5" width="20" height="12"/><rect class="ry k" x="1654.500" y=".5" width="45" height="12"/><text class="b c" x="1677" y="10.500">12</text><text class="c" x="1714.500" y="10.500">S</text><rect class="rb k" x="1729.500" y=".5" width="20" height="12"/><use href="#arm" x="1739.500" y="6.500"/></g>
<rect x="1756" y="447" width="2" height="84" fill="#111"/>
<g transform="translate(0 465)"><rect class="rd k" x="1577.500" y=".5" width="69" height="12"/><rect x="1580" y="2" width="2" height="2" fill="#222"/><rect x="1580" y="5.500" width="2" height="2" fill="#222"/><rect x="1580" y="9" width="2" height="2" fill="#222"/><text x="1588" y="10" textLength="49">All Channe</text><use href="#ab" x="1641" y="6"/><rect class="rd k" x="1654.500" y=".5" width="45" height="12"/><rect x="1655" y="1" width="35" height="11" fill="#dcb44d"/><circle cx="1657" cy="3" r="2.500" fill="#111"/><text class="c" x="1679" y="10">-1.9</text><rect class="rd k" x="1704.500" y=".5" width="45" height="12"/><text class="c" x="1727" y="10">C</text></g>
<g transform="translate(0 482)"><rect class="rb k" x="1577.500" y=".5" width="16" height="12"/><text class="c" x="1586" y="10">In</text><rect class="ry k" x="1597.500" y=".5" width="26" height="12"/><text class="c" x="1610.500" y="10">Auto</text><rect class="rb k" x="1627.500" y=".5" width="19" height="12"/><text class="c" x="1637" y="10">Off</text><rect class="rd k" x="1654.500" y=".5" width="29" height="12"/><text class="c" x="1669" y="10">-inf</text><rect class="rd k" x="1687.500" y=".5" width="29" height="12"/><text class="c" x="1702" y="10">-inf</text><rect class="rd k" x="1720.500" y=".5" width="29" height="12"/><text class="c" x="1735" y="10">-inf</text></g>
<rect class="rd k" x="1577.500" y="499.500" width="69" height="12"/><text x="1579" y="509" textLength="40">1-Group</text><use href="#ab" x="1641" y="505"/><rect class="rg k" x="1577.500" y="516.500" width="69" height="12"/><rect class="rd k" x="1654.500" y="499.500" width="29" height="12"/><text class="c" x="1669" y="509">-inf</text>
<g transform="translate(0 536)"><use href="#R"/><rect class="rb k" x="1654.500" y=".5" width="45" height="12"/><text class="b c" x="1677" y="10.500">13</text><text class="c" x="1714.500" y="10.500">S</text></g>
<rect x="1575" y="682" width="74" height="2" fill="#e4e5e9"/><rect x="1651" y="682" width="105" height="2" fill="#e4e5e9"/><rect x="1756" y="682" width="2" height="2" fill="#111"/>
<rect x="847" y="41" width="14" height="643" fill="url(#sh)"/>
</svg>
</body></html>
